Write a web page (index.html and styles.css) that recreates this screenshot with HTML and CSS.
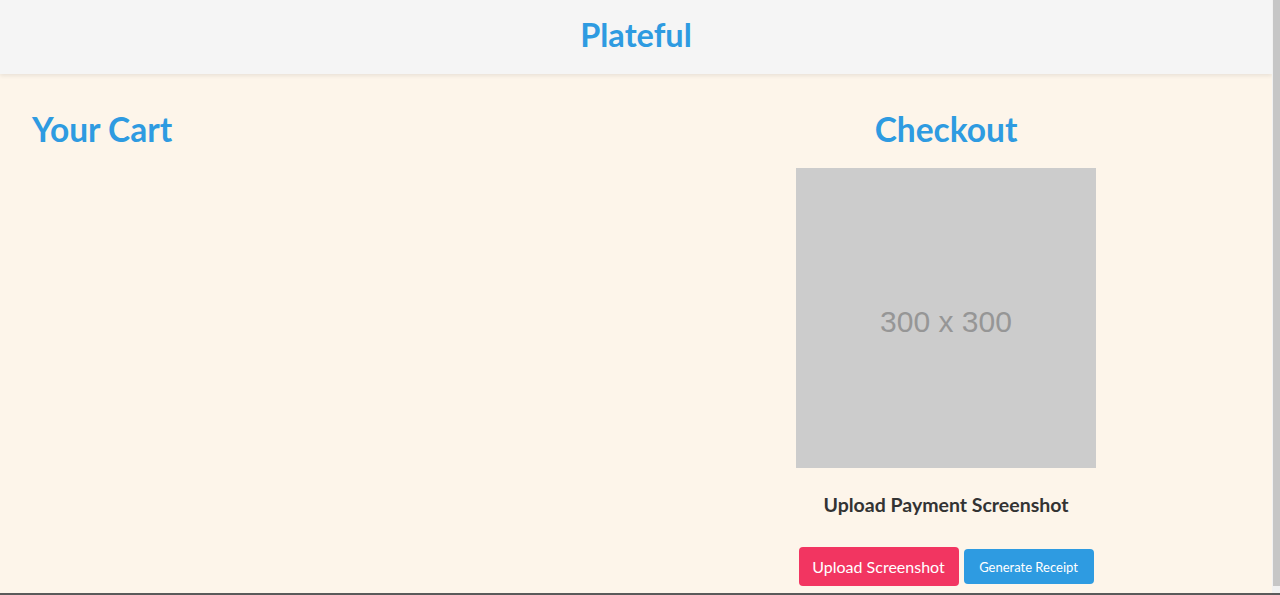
FILE: index.html
```html
<!DOCTYPE html>
<html lang="en">
<head>
<meta charset="utf-8">
<title>Plateful</title>
<link rel="stylesheet" href="styles.css">
</head>
<body>
<header class="site-header">
  <h1 class="brand">Plateful</h1>
</header>
<main class="page">
  <section class="cart">
    <h2 class="section-title">Your Cart</h2>
  </section>
  <section class="checkout">
    <h2 class="section-title">Checkout</h2>
    <div class="qr-placeholder">300 x 300</div>
    <h3 class="upload-title">Upload Payment Screenshot</h3>
    <div class="actions">
      <button class="btn btn-upload">Upload Screenshot</button>
      <button class="btn btn-receipt">Generate Receipt</button>
    </div>
  </section>
</main>
<div class="scrollbar"><div class="scrollbar-thumb"></div></div>
<div class="bottom-edge"></div>
</body>
</html>
```
FILE: styles.css
```css
html {
  background: #fdf5ea;
  overflow: hidden;
}
body {
  margin: 0;
  padding-right: 8px;
  font-family: "Lato", "Open Sans", sans-serif;
  background: #fdf5ea;
  color: #333;
}
.site-header {
  height: 74px;
  background: #f5f5f5;
  box-shadow: 0 2px 4px rgba(0, 0, 0, 0.08);
  display: flex;
  align-items: center;
  justify-content: center;
  position: relative;
  z-index: 1;
}
.brand {
  margin: 0 0 5px;
  font-size: 32.5px;
  font-weight: 700;
  line-height: 40px;
  color: #2e9be1;
}
.page {
  display: grid;
  grid-template-columns: 1fr 1fr;
  column-gap: 32px;
  padding: 35px 32px 18px;
}
.section-title {
  margin: 0;
  font-size: 33.5px;
  font-weight: 700;
  line-height: 40px;
  color: #2e9be1;
}
.checkout {
  display: flex;
  flex-direction: column;
  align-items: center;
}
.qr-placeholder {
  margin-top: 19px;
  width: 300px;
  height: 300px;
  box-sizing: border-box;
  padding-top: 7px;
  background: #cccccc;
  color: #969696;
  font-family: "Liberation Sans", Arial, sans-serif;
  font-size: 30px;
  display: flex;
  align-items: center;
  justify-content: center;
}
.upload-title {
  margin: 25px 0 0;
  font-size: 19.5px;
  font-weight: 700;
  line-height: 24px;
  color: #333;
}
.actions {
  margin-top: 30px;
  display: flex;
  align-items: center;
  gap: 5px;
}
.btn {
  border: none;
  color: #fff;
  font-family: "Lato", "Open Sans", sans-serif;
  border-radius: 4px;
}
.btn-upload {
  background: #f23561;
  font-size: 16px;
  height: 39px;
  width: 160px;
}
.btn-receipt {
  background: #2e9be1;
  font-size: 13px;
  height: 35px;
  width: 130px;
}
.scrollbar {
  position: fixed;
  top: 0;
  right: 0;
  bottom: 0;
  width: 8px;
  background: #f1f1f1;
  z-index: 2;
}
.scrollbar-thumb {
  margin-left: 1px;
  height: 586px;
  background: #c6c6c6;
}
.bottom-edge {
  position: fixed;
  left: 0;
  right: 0;
  bottom: 0;
  height: 2px;
  background: #5a5a5a;
  z-index: 3;
}
```
